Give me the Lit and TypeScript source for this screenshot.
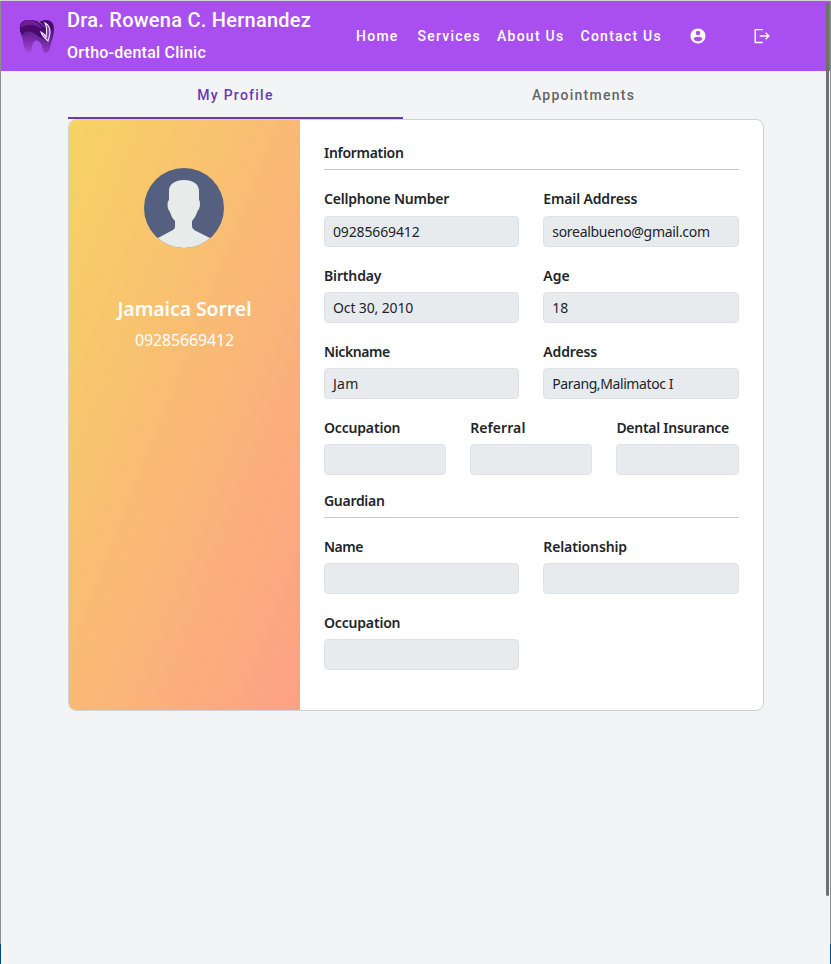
import { LitElement, html, css } from "lit";
import { customElement, property } from "lit/decorators.js";

@customElement("profile-field")
class ProfileField extends LitElement {
  @property() label = "";
  @property() value = "";
  @property() track = "0";
  @property() valueTrack = "0";
  static styles = css`
    :host { display: block; min-width: 0; }
    .label { font-weight: 600; font-size: 14px; line-height: var(--label-line, 21px); margin-bottom: var(--label-gap, 7px); height: 21px; white-space: nowrap; }
    .value { box-sizing: border-box; height: 31px; border: 1px solid #dee2e6; border-radius: 4px; background: #e8ebee; padding: 4px 8px; font-size: 14px; line-height: 21px; white-space: nowrap; }
  `;
  render() {
    return html`<div class="label" style="letter-spacing:${this.track}px">${this.label}</div>
      <div class="value" style="letter-spacing:${this.valueTrack}px">${this.value}</div>`;
  }
}

interface Field { label: string; value?: string; t?: number; v?: number; }

const rows: Field[][] = [
  [{ label: "Cellphone Number", value: "09285669412", t: -0.22, v: -0.14 }, { label: "Email Address", value: "sorealbueno@gmail.com", t: -0.14, v: -0.3 }],
  [{ label: "Birthday", value: "Oct 30, 2010", t: -0.15, v: -0.13 }, { label: "Age", value: "18" }],
  [{ label: "Nickname", value: "Jam", t: -0.4, v: 0.3 }, { label: "Address", value: "Parang,Malimatoc I", t: -0.15, v: -0.4 }],
  [{ label: "Occupation", t: -0.18 }, { label: "Referral", t: 0.08 }, { label: "Dental Insurance", t: -0.27 }],
];
const guardian: Field[][] = [
  [{ label: "Name", t: -0.5 }, { label: "Relationship", t: -0.12 }],
  [{ label: "Occupation", t: -0.18 }],
];

@customElement("app-root")
class AppRoot extends LitElement {
  static styles = css`
    :host { display: block; }
    .window { position: relative; box-sizing: border-box; height: 964px; overflow: hidden; border-top: 1px solid #d8d2dc; padding-left: 1px; background: #f3f4f6; color: #212529; font-family: "Noto Sans", sans-serif; }
    .scrollbar { position: absolute; right: 2px; top: 2px; width: 3px; height: 893px; background: #707070; border-radius: 0 0 2px 2px; }
    .frame { position: absolute; top: 0; width: 1px; height: 963px; background: linear-gradient(#8d8d90 943px, #004a78 943px); }
    .frame.left { left: 0; }
    .frame.right { right: 0; }
    header { display: flex; height: 70px; background: #a94ff0; color: #fff; font-family: Roboto, sans-serif; font-weight: 500; width: 829px; }
    .logo { display: block; width: 36px; height: 36px; margin: 17px 12px 0 18px; }
    .brand { width: 289px; }
    .name { font-size: 20px; line-height: 32px; letter-spacing: .25px; margin-top: 3px; white-space: nowrap; }
    .clinic { font-size: 16px; line-height: 32px; letter-spacing: .25px; margin-top: 1px; }
    nav { display: flex; align-items: center; font-size: 14px; letter-spacing: 1.25px; white-space: nowrap; }
    .home { width: 61.5px; }
    .services { width: 79.5px; }
    .about { width: 83.5px; }
    .contact { width: 108.3px; }
    .icon { display: block; width: 18px; height: 18px; fill: #fff; }
    .account { margin-right: 46.2px; }
    .tabs { display: grid; grid-template-columns: 335px 361px; width: 696px; margin-left: 67px; height: 48px; font: 500 14px/48px Roboto, sans-serif; letter-spacing: 1.25px; text-align: center; color: #666; }
    .tab.active { color: #673ab7; box-shadow: inset 0 -2px #673ab7; }
    .card { box-sizing: border-box; display: grid; grid-template-columns: 231px 1fr; width: 696px; height: 592px; margin-left: 67px; border: 1px solid #cfd1d4; border-radius: 8px; background: #fff; overflow: hidden; }
    .person { background: linear-gradient(to right bottom, #f6d365, #fda085); color: #fff; text-align: center; }
    .avatar { display: block; width: 80px; height: 80px; margin: 48px auto 47px 75px; }
    .fullname { font-size: 19.5px; font-weight: 600; line-height: 28px; letter-spacing: -.1px; white-space: nowrap; }
    .phone { font-size: 16px; line-height: 24px; margin-top: 5px; letter-spacing: -.15px; }
    .details { padding: 21px 24px 0; }
    .heading { margin: 0 0 18px; height: 28px; border-bottom: 1px solid #c8cacb; font-size: 14px; font-weight: 600; letter-spacing: -.3px; line-height: 24px; }
    .row { display: grid; column-gap: 24px; margin-bottom: 17px; grid-template-columns: 195.3px 195.7px; }
    .row + .row { --label-line: 23px; }
    .row.three { grid-template-columns: 122.2px 122.2px 122.6px; margin-bottom: 14px; }
    .guardian .row { --label-line: 21px; --label-gap: 6px; margin-bottom: 18px; }
  `;
  private row(fields: Field[]) {
    return html`<div class="row ${fields.length === 3 ? "three" : ""}">
      ${fields.map(f => html`<profile-field .label=${f.label} .value=${f.value ?? ""} .track=${String(f.t ?? 0)} .valueTrack=${String(f.v ?? 0)}></profile-field>`)}
    </div>`;
  }
  render() {
    return html`<div class="window">
      <header>
        <svg class="logo" viewBox="0 0 36 36">
          <defs>
            <linearGradient id="root" x1="0" y1="0" x2="0" y2="1"><stop offset=".2" stop-color="#4b086d"/><stop offset="1" stop-color="#8f3fc4"/></linearGradient>
            <linearGradient id="arch" x1="0" y1="0" x2="0" y2="1"><stop stop-color="#651a91"/><stop offset="1" stop-color="#a04bda"/></linearGradient>
          </defs>
          <path fill="url(#root)" d="M1 12C0 5 4 2 10 2c5 0 8 1 10 2 2-1 4-2 7-2 6 0 8 4 8 9 0 7-3 14-4 19-1 3-2 5-4 5-3 0-3-4-4-7-1-4-4-6-8-6L1 14z"/>
          <path fill="#4b086d" d="M1 12C0 5 4 2 10 2c8 0 14 4 17 10l2 12c-5-2-9-6-14-8-5-1-9 0-12 3z"/>
          <path fill="#6b2195" d="M1 10c1-5 4-8 9-8 6 0 11 4 13 9-6-4-15-6-22-1z"/>
          <path fill="url(#arch)" d="M3 18c3-4 8-5 12-2l6 5c-5 0-8 4-8 9 0 3-1 5-3 5-4 0-6-10-7-17z"/>
          <path fill="none" stroke="#5b3f92" stroke-width=".8" d="M3 18c3-5 8-5 12-2s9 6 14 7"/>
          <path fill="none" stroke="#b79bd7" stroke-width=".6" d="M19 4c3 1 5 3 6 5"/>
          <path fill="#8140cf" stroke="#f0e8fa" stroke-width="1.100" d="M26 5c4 2 5 6 5 9s-1 6-2 9c-3-3-6-5-7-9 2 1 4 3 5 5 1-6 1-10-1-14z"/>
        </svg>
        <div class="brand"><div class="name">Dra. Rowena C. Hernandez</div><div class="clinic">Ortho-dental Clinic</div></div>
        <nav>
          <span class="home">Home</span><span class="services">Services</span><span class="about">About Us</span><span class="contact">Contact Us</span>
          <svg class="icon account" viewBox="0 0 24 24"><path d="M12 2C6.500 2 2 6.500 2 12s4.500 10 10 10 10-4.500 10-10S17.500 2 12 2zm0 3a3 3 0 1 1 0 6 3 3 0 0 1 0-6zm0 14.200a7.200 7.200 0 0 1-6-3.220c.03-1.990 4-3.080 6-3.080 1.990 0 5.970 1.090 6 3.080a7.200 7.200 0 0 1-6 3.220z"/></svg>
          <svg class="icon" viewBox="0 0 24 24"><path d="M2 2.500h11v1.800H4v15.400h9v1.800H2zM17.500 7l5 5-5 5-1.300-1.300 2.700-2.800H9v-1.800h9.900l-2.700-2.800z"/></svg>
        </nav>
      </header>
      <div class="tabs"><div class="tab active">My Profile</div><div class="tab">Appointments</div></div>
      <main class="card">
        <section class="person">
          <svg class="avatar" viewBox="0 0 80 80">
            <defs><clipPath id="disc"><circle cx="40" cy="40" r="40"/></clipPath></defs>
            <g clip-path="url(#disc)"><rect width="80" height="80" fill="#556080"/>
            <path fill="#e7eceb" d="M40 12c9 0 15 4 15 11v9c1.500 1 1.500 9-1.500 11-1 4-3 7-5.500 10v5c0 2 1 3 3 4.500L66 70v10H14V70l14-7.500c2-1 3-2.500 3-4.500v-5c-3-3-4-6-5.500-10-2.500-2-2.500-10-.5-11v-9c0-7 6-11 15-11z"/></g>
          </svg>
          <div class="fullname">Jamaica Sorrel</div>
          <div class="phone">09285669412</div>
        </section>
        <section class="details">
          <h2 class="heading">Information</h2>
          ${rows.map(r => this.row(r))}
          <h2 class="heading">Guardian</h2>
          <div class="guardian">${guardian.map(r => this.row(r))}</div>
        </section>
      </main>
      <div class="scrollbar"></div><div class="frame left"></div><div class="frame right"></div>
    </div>`;
  }
}
